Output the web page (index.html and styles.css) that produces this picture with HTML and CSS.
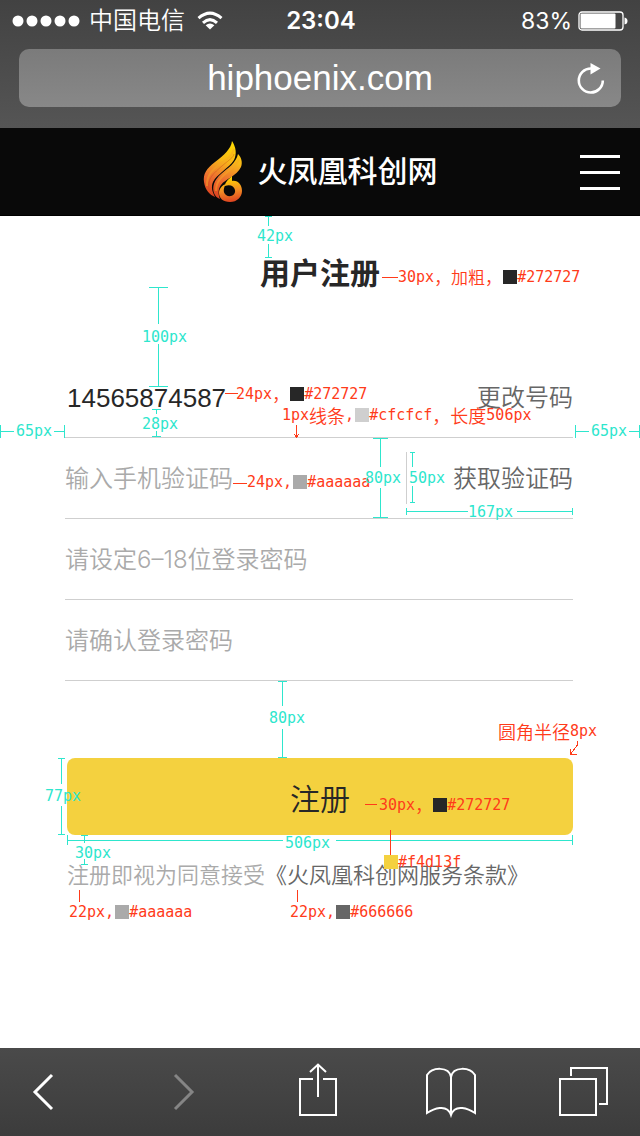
FILE: index.html
```html
<!DOCTYPE html>
<html lang="zh-CN">
<head>
<meta charset="utf-8">
<meta name="viewport" content="width=device-width">
<title>用户注册</title>
<link rel="stylesheet" href="styles.css">
</head>
<body>
<div class="browser-top">
  <div class="status">
    <div class="carrier">
      <svg class="dots" width="68" height="12" viewBox="0 0 68 12" fill="#fff"><circle cx="6" cy="6" r="5.5"/><circle cx="20" cy="6" r="5.5"/><circle cx="34" cy="6" r="5.5"/><circle cx="48" cy="6" r="5.5"/><circle cx="62" cy="6" r="5.5"/></svg>
      <span>中国电信</span>
      <svg class="wifi" width="26" height="20" viewBox="0 0 26 20" fill="none" stroke="#fff" stroke-width="3"><path d="M1.5 7.2Q13-3 24.5 7.2"/><path d="M6 11.8Q13 5.400 20 11.800"/><path d="M8.600 14.200Q13 10.800 17.400 14.200L13 18.500Z" fill="#fff" stroke="none"/></svg>
    </div>
    <span class="clock">23:04</span>
    <div class="power">
      <span>83%</span>
      <svg width="50" height="20" viewBox="0 0 50 20"><rect x="1" y="1" width="44" height="18" rx="3" fill="none" stroke="#fff" stroke-width="1.300"/><rect x="2.500" y="2.500" width="35" height="15" rx="1" fill="#fff"/><path d="M46.500 6.500Q49.500 7 49.500 10T46.500 13.500Z" fill="#fff"/></svg>
    </div>
  </div>
  <div class="address">
    <span class="url">hiphoenix.com</span>
    <button class="reload" aria-label="重新加载"><svg width="28" height="32" viewBox="0 0 28 32"><path d="M14 6.500A12 12 0 1 0 25.800 18.500" fill="none" stroke="#fff" stroke-width="2.600"/><path d="M13.500 1v11.500L23.500 6.500Z" fill="#fff"/></svg></button>
  </div>
</div>

<header class="site-header">
  <a class="brand" href="#">
    <svg class="flame" width="40" height="64" viewBox="0 0 40 64">
      <defs>
        <linearGradient id="fire" x1="30" y1="2" x2="14" y2="62" gradientUnits="userSpaceOnUse"><stop offset="0" stop-color="#ffdc00"/><stop offset=".32" stop-color="#f8b818"/><stop offset=".62" stop-color="#ee7030"/><stop offset="1" stop-color="#d8381c"/></linearGradient>
        <linearGradient id="curl" x1="25" y1="38" x2="28" y2="63" gradientUnits="userSpaceOnUse"><stop offset="0" stop-color="#ffd400"/><stop offset=".5" stop-color="#f28d24"/><stop offset="1" stop-color="#dc3c20"/></linearGradient>
      </defs>
      <path d="M29 1C28 9 21 15 12 22C3 29 0 34 1 42C2 50 7 55 12 57C9 51 8 47 10 42C14 34 26 28 31 20C34 14 33 7 29 1Z" fill="url(#fire)"/>
      <path d="M35 14C33 23 25 28 18 34C11 40 9 47 11 53C12 56 14 58 17 59C15 54 15 49 18 45C22 39 34 36 38 27C40 22 38 17 35 14Z" fill="url(#fire)"/>
      <path d="M4 46C3 35 11 28 20 22S29 14 31 9M13 51C13 40 21 35 28 29S34 22 36 20" fill="none" stroke="#f5a626" stroke-width="2" opacity=".5"/>
      <path d="M6 50C4 38 11 33 19 26S30 18 31 14" fill="none" stroke="#c84c20" opacity=".45"/>
      <path d="M29 36L29 41C35 40 39 45 39 51C39 57 34 62 27 62C20 62 16 58 16 53C16 49 19 45 23 44C20 48 20 53 23 55C27 58 33 55 32 50C31 46 27 44 22 46C22 42 25 40 29 36Z" fill="url(#curl)"/>
    </svg>
    <span class="brand-name">火凤凰科创网</span>
  </a>
  <button class="menu" aria-label="菜单"><i></i><i></i><i></i></button>
</header>

<main class="page">
  <h1 class="title">用户注册</h1>
  <form class="form">
    <div class="row">
      <input class="field phone" type="tel" aria-label="手机号码" value="14565874587">
      <button class="link" type="button">更改号码</button>
    </div>
    <div class="row">
      <input class="field" type="text" aria-label="手机验证码" placeholder="输入手机验证码">
      <button class="link code" type="button">获取验证码</button>
    </div>
    <div class="row"><input class="field" type="password" aria-label="登录密码" placeholder="请设定6–18位登录密码"></div>
    <div class="row"><input class="field" type="password" aria-label="确认登录密码" placeholder="请确认登录密码"></div>
    <button class="submit" type="button">注册</button>
    <p class="terms">注册即视为同意接受<a href="#">《火凤凰科创网服务条款》</a></p>
  </form>

  <div class="specs">
    <svg class="rules" width="640" height="832" viewBox="0 216 640 832" fill="none" shape-rendering="crispEdges">
      <g stroke="#2ee6cd">
        <path d="M265 216.500h7M268.500 216v10M268.500 244v13M265 257.500h7"/>
        <path d="M149 287.500h19M158.500 287v37M158.500 344v42M149 386.500h19"/>
        <path d="M152 409.500h9M156.500 409v5M156.500 431v5M152 436.500h9"/>
        <path d="M.5 425v13M1 431.500h13M54 431.500h10M64.500 425v13"/>
        <path d="M575.500 425v13M576 431.500h13M629 431.500h10M639.500 425v13"/>
        <path d="M373 438.500h15M380.500 438v29M380.500 488v29M373 517.500h15"/>
        <path d="M410 452.500h5M412.500 452v15M412.500 486v16M410 502.500h5"/>
        <path d="M406.500 508v7M406 511.500h62M517 511.500h56M572.500 508v7"/>
        <path d="M278 681.500h9M282.500 681v25M282.500 729v28M278 757.500h9"/>
        <path d="M58 758.500h7M61.500 758v26M61.500 806v28M58 834.500h7"/>
        <path d="M67.500 835v10M67 840.500h216M336 840.500h237M572.500 835v10"/>
        <path d="M81 835.500h7M84.500 835v8M84.500 859v5M81 864.500h7"/>
      </g>
      <path d="M406.500 452v52" stroke="#cfcfcf"/>
      <g stroke="#ff3b1a">
        <path d="M382 277.500h16M225 393.500h13M233 483.500h14M365 804.500h12M390.500 830v25M79.500 890v12M297.500 890v12"/>
        <path d="M296.500 425v12M294 434l2.500 3L299 434"/>
        <path d="M577.500 741v4L571 753.500M570.500 749v5.500h6"/>
      </g>
    </svg>
    <span class="note size n1">42px</span>
    <span class="note n2">30px<b>，加粗，</b><i class="chip ink"></i>#272727</span>
    <span class="note size n3">100px</span>
    <span class="note n4">24px<b>，</b><i class="chip ink"></i>#272727</span>
    <span class="note n5">1px<b class="wide">线条</b>,<i class="chip line"></i>#cfcfcf<b class="wide">，长度</b>506px</span>
    <span class="note size n6">28px</span>
    <span class="note size n7">65px</span>
    <span class="note size n8">65px</span>
    <span class="note n9">24px,<i class="chip pale"></i>#aaaaaa</span>
    <span class="note size n10">80px</span>
    <span class="note size n11">50px</span>
    <span class="note size n12">167px</span>
    <span class="note size n13">80px</span>
    <span class="note n14"><b class="wide">圆角半径</b>8px</span>
    <span class="note size n15">77px</span>
    <span class="note n16">30px<b>，</b><i class="chip ink"></i>#272727</span>
    <span class="note size n17">506px</span>
    <span class="note size n18">30px</span>
    <span class="note n19"><i class="chip gold"></i>#f4d13f</span>
    <span class="note n20">22px,<i class="chip pale"></i>#aaaaaa</span>
    <span class="note n21">22px,<i class="chip gray"></i>#666666</span>
  </div>
</main>

<nav class="toolbar" aria-label="浏览器工具栏">
  <button aria-label="后退"><svg width="50" height="56" viewBox="0 0 50 56"><path d="M34 13L17 30L34 47"/></svg></button>
  <button aria-label="前进"><svg width="50" height="56" viewBox="0 0 50 56"><path d="M16 13L33 30L16 47"/></svg></button>
  <button aria-label="分享"><svg width="50" height="56" viewBox="0 0 50 56"><path d="M20 17H7V53H43V17H30M25 35V3M17 10L25 2.500L33 10"/></svg></button>
  <button aria-label="书签"><svg width="50" height="56" viewBox="0 0 50 56"><path d="M25 15C23 4 6 5 1 13V51C7 47 21 41 25 53C29 41 43 47 49 51V13C44 5 27 4 25 15V53"/></svg></button>
  <button aria-label="标签页"><svg width="50" height="56" viewBox="0 0 50 56"><path d="M1 17H37V53H1ZM12 14V6H48V42H40"/></svg></button>
</nav>
</body>
</html>
```
FILE: styles.css
```css
* { box-sizing: border-box; }
body {
  margin: 0;
  min-height: 100vh;
  display: flex;
  flex-direction: column;
  background: #fff;
  color: #272727;
  font-family: "Liberation Sans", "Noto Sans CJK SC", sans-serif;
}
button, input {
  font: inherit;
  color: inherit;
  background: none;
  border: 0;
  padding: 0;
  margin: 0;
  border-radius: 0;
}
svg { display: block; }

/* Browser chrome */
.browser-top {
  padding: 0 19px 21px;
  background: linear-gradient(#424242, #555);
  color: #fff;
}
.status {
  height: 49px;
  padding: 0 0 8px;
  margin: 0 -9px 0 -7px;
  display: grid;
  grid-template-columns: 1fr auto 1fr;
  align-items: center;
  font-size: 24px;
  line-height: 32px;
}
.carrier { display: flex; align-items: center; gap: 9px; font-weight: 350; }
.wifi { margin-left: 3px; }
.clock { font-family: Inter, sans-serif; font-weight: 600; }
.power {
  display: flex;
  align-items: center;
  justify-content: flex-end;
  gap: 6px;
  margin-right: 2px;
  font-family: Inter, sans-serif;
  font-size: 23px;
}
.address {
  height: 58px;
  border-radius: 10px;
  background: linear-gradient(#7b7b7b, #888);
  display: grid;
  grid-template-columns: 1fr auto 1fr;
  align-items: center;
}
.url { grid-column: 2; font-size: 35px; line-height: 40px; }
.reload { justify-self: end; margin-right: 16px; }

/* Site header */
.site-header {
  height: 88px;
  padding: 0 20px;
  background: #090909;
  border-bottom: 1px solid #000;
  display: grid;
  grid-template-columns: 1fr auto 1fr;
  align-items: center;
}
.brand {
  grid-column: 2;
  display: flex;
  align-items: center;
  gap: 15px;
  color: #fff;
  text-decoration: none;
}
.brand-name { font-size: 30px; line-height: 40px; font-weight: 500; }
.menu {
  justify-self: end;
  width: 40px;
  padding-top: 2px;
  display: flex;
  flex-direction: column;
  gap: 13px;
}
.menu i { display: block; width: 100%; height: 3px; background: #fff; }

/* Registration */
.page { position: relative; flex: 1; padding: 38px 67px 0; }
.title {
  margin: 0 0 63px;
  text-align: center;
  font-size: 30px;
  line-height: 40px;
  font-weight: 700;
}
.row {
  height: 81px;
  padding-top: 2px;
  margin-left: -2px;
  border-bottom: 1px solid #cfcfcf;
  display: flex;
  align-items: center;
  font-size: 24px;
  font-weight: 350;
}
.field { flex: 1; min-width: 0; height: 40px; outline: 0; }
.field::placeholder {
  color: #aaa;
  opacity: 1;
  font-family: Inter, "Noto Sans CJK SC", sans-serif;
}
.phone { font-size: 26px; padding-left: 2px; }
.link { color: #666; line-height: 40px; }
.code { width: 167px; text-align: right; }
.submit {
  display: block;
  width: 100%;
  height: 77px;
  margin-top: 77px;
  border-radius: 8px;
  background: #f4d13f;
  font-size: 30px;
  font-weight: 350;
}
.terms {
  margin: 25px 0 0;
  color: #aaa;
  font-size: 22px;
  line-height: 32px;
  font-weight: 350;
  white-space: nowrap;
}
.terms a { color: #666; text-decoration: none; }

/* Measurement callouts, pinned over the page */
.specs { position: absolute; top: 1px; left: 0; width: 100%; pointer-events: none; }
.rules { position: absolute; top: -1px; left: 0; }
.note {
  position: absolute;
  display: flex;
  align-items: center;
  white-space: nowrap;
  color: #ff3b1a;
  font: 15px/20px "DejaVu Sans Mono", "Noto Sans CJK SC", monospace;
}
.note b { font-family: "Noto Sans CJK SC", sans-serif; font-size: 17px; font-weight: 350; }
.note .wide { font-size: 18px; }
.size { color: #2ee6cd; }
.chip { width: 14px; height: 14px; margin-left: 1px; }
.ink { background: #272727; }
.line { background: #cfcfcf; }
.pale { background: #aaa; }
.gray { background: #666; }
.gold { background: #f4d13f; }
.n1 { left: 257px; top: 9px; }
.n2 { left: 398px; top: 50px; }
.n3 { left: 142px; top: 110px; }
.n4 { left: 236px; top: 167px; }
.n5 { left: 282px; top: 188px; }
.n6 { left: 142px; top: 197px; }
.n7 { left: 16px; top: 204px; }
.n8 { left: 591px; top: 204px; }
.n9 { left: 247px; top: 255px; }
.n10 { left: 365px; top: 251px; }
.n11 { left: 409px; top: 251px; }
.n12 { left: 468px; top: 285px; }
.n13 { left: 269px; top: 491px; }
.n14 { left: 498px; top: 504px; }
.n15 { left: 45px; top: 569px; }
.n16 { left: 379px; top: 578px; }
.n17 { left: 285px; top: 616px; }
.n18 { left: 75px; top: 626px; }
.n19 { left: 383px; top: 635px; }
.n20 { left: 69px; top: 685px; }
.n21 { left: 290px; top: 685px; }

/* Bottom toolbar */
.toolbar {
  height: 88px;
  padding: 14px 31px 0 18px;
  background: linear-gradient(#4a4a4a, #3c3c3c);
  display: grid;
  grid-template-columns: 141fr 134fr 133fr 133fr 50px;
}
.toolbar button { width: 50px; height: 56px; }
.toolbar path { fill: none; stroke: #fff; stroke-width: 2; }
.toolbar button:nth-child(-n+2) path { stroke-width: 3; }
.toolbar button:nth-child(2) path { stroke: #858585; }
```
